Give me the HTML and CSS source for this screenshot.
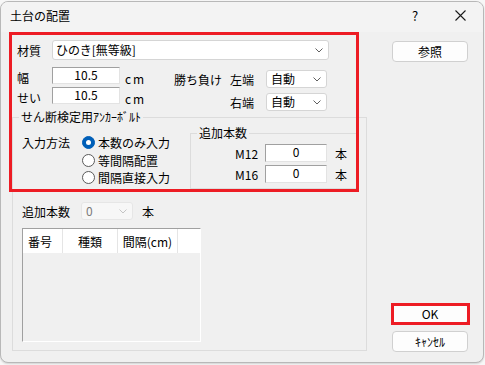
FILE: index.html
```html
<!DOCTYPE html>
<html lang="ja">
<head>
<meta charset="utf-8">
<title>土台の配置</title>
<link rel="stylesheet" href="styles.css">
</head>
<body>
<div class="screen">
  <div class="dialog">
    <div class="titlebar">
      <span class="title">土台の配置</span>
      <span class="cap cap-help">?</span>
      <span class="cap cap-close"><svg width="11" height="11" viewBox="0 0 11 11"><path d="M0.5 0.5 L10.5 10.5 M10.5 0.5 L0.5 10.5" stroke="#1a1a1a" stroke-width="1.1" fill="none"/></svg></span>
    </div>
    <div class="main">
      <div class="left">
        <div class="row-mat">
          <span class="lbl-mat">材質</span>
          <div class="combo combo-mat"><span>ひのき[無等級]</span><svg class="chev" width="8" height="5" viewBox="0 0 8 5"><path d="M0.5 0.5 L4 4 L7.5 0.5" fill="none" stroke="#606060"/></svg></div>
        </div>
        <div class="dims">
          <div class="dim-col">
            <div class="dim-row"><span class="dim-lbl">幅</span><div class="edit edit-dim">10.5</div><span class="unit">cm</span></div>
            <div class="dim-row"><span class="dim-lbl">せい</span><div class="edit edit-dim">10.5</div><span class="unit">cm</span></div>
          </div>
          <div class="win-col">
            <div class="win-row"><span class="win-lbl">勝ち負け</span><span class="side-lbl">左端</span><div class="combo combo-side"><span>自動</span><svg class="chev" width="8" height="5" viewBox="0 0 8 5"><path d="M0.5 0.5 L4 4 L7.5 0.5" fill="none" stroke="#606060"/></svg></div></div>
            <div class="win-row"><span class="win-lbl"></span><span class="side-lbl">右端</span><div class="combo combo-side"><span>自動</span><svg class="chev" width="8" height="5" viewBox="0 0 8 5"><path d="M0.5 0.5 L4 4 L7.5 0.5" fill="none" stroke="#606060"/></svg></div></div>
          </div>
        </div>
        <fieldset class="group">
          <legend>せん断検定用ｱﾝｶｰﾎﾞﾙﾄ</legend>
          <div class="g-row1">
            <div class="method">
              <span class="method-lbl">入力方法</span>
              <div class="radios">
                <div class="radio"><span class="rb on"></span><span>本数のみ入力</span></div>
                <div class="radio"><span class="rb"></span><span>等間隔配置</span></div>
                <div class="radio"><span class="rb"></span><span>間隔直接入力</span></div>
              </div>
            </div>
            <fieldset class="sub">
              <legend>追加本数</legend>
              <div class="sub-rows">
                <div class="sub-row"><span class="m-lbl">M12</span><div class="edit edit-m">0</div><span class="m-unit">本</span></div>
                <div class="sub-row"><span class="m-lbl">M16</span><div class="edit edit-m">0</div><span class="m-unit">本</span></div>
              </div>
            </fieldset>
          </div>
          <div class="g-row2">
            <span class="add-lbl">追加本数</span>
            <div class="combo combo-dis"><span>0</span><svg class="chev" width="8" height="5" viewBox="0 0 8 5"><path d="M0.5 0.5 L4 4 L7.5 0.5" fill="none" stroke="#c4c4c4"/></svg></div>
            <span class="add-unit">本</span>
          </div>
          <div class="list">
            <div class="list-head">
              <span class="col c1">番号</span>
              <span class="col c2">種類</span>
              <span class="col c3">間隔(cm)</span>
              <span class="col c4"></span>
            </div>
          </div>
        </fieldset>
      </div>
      <div class="right">
        <div class="btn">参照</div>
        <div class="btn btn-ok">OK</div>
        <div class="btn btn-cancel">ｷｬﾝｾﾙ</div>
      </div>
    </div>
    <div class="hl hl-main"></div>
    <div class="hl hl-ok"></div>
  </div>
</div>
</body>
</html>
```
FILE: styles.css
```css
* { box-sizing: border-box; }
html, body { margin: 0; padding: 0; }
body {
  background: #f7f7f7;
  font-family: "Noto Sans CJK JP", "Noto Sans", sans-serif;
  font-size: 12px;
  color: #000;
  width: 485px;
  height: 365px;
  overflow: hidden;
}
.screen { padding-top: 1px; }
.dialog {
  position: relative;
  width: 484px;
  height: 362px;
  border: 1px solid #b8b8b8;
  border-radius: 8px;
  background: #f0f0f0;
  display: flex;
  flex-direction: column;
  box-shadow: 0 1px 2px rgba(0,0,0,0.15);
  overflow: hidden;
}
.titlebar {
  height: 30px;
  display: flex;
  align-items: flex-start;
  background: #f3f3f3;
  line-height: 27px;
  flex: none;
}
.title { padding-left: 9px; flex: 1; }
.cap {
  height: 27px;
  display: flex;
  align-items: center;
  justify-content: center;
}
.cap-help { width: 46px; font-size: 13px; }
.cap-close { width: 45px; }
.main { flex: 1; display: flex; }
.left { width: 365px; padding-left: 11px; }
.right {
  margin-left: auto;
  padding: 9px 15px 10px 0;
  display: flex;
  flex-direction: column;
}
.btn {
  width: 76px;
  height: 21px;
  border: 1px solid #d0d0d0;
  border-radius: 4px;
  background: #fdfdfd;
  display: flex;
  align-items: center;
  justify-content: center;
  line-height: 1;
}
.btn-ok { margin-top: auto; }
.btn-cancel { margin-top: 7px; }

.combo {
  display: flex;
  align-items: center;
  justify-content: space-between;
  background: #fff;
  border: 1px solid #d5d5d5;
  border-radius: 3px;
  padding: 0 5px 0 3px;
  line-height: 14px;
}
.chev { flex: none; }

.row-mat {
  margin-top: 8px;
  padding-left: 5px;
  display: flex;
  align-items: center;
  height: 20px;
}
.lbl-mat { width: 35px; }
.combo-mat { width: 277px; height: 20px; }

.dims { margin-top: 7px; padding-left: 5px; display: flex; }
.dim-col { width: 157px; display: flex; flex-direction: column; gap: 3px; }
.dim-row { display: flex; height: 17px; }
.dim-lbl { width: 35px; padding-top: 3px; line-height: 16px; }
.edit {
  background: #fff;
  border: 1px solid;
  border-color: #a0a0a0 #e3e3e3 #e3e3e3 #a0a0a0;
  text-align: center;
  line-height: 14px;
}
.edit-dim { width: 68px; height: 17px; }
.unit { margin-left: 5px; padding-top: 4px; line-height: 16px; letter-spacing: 2px; }
.win-col { margin-top: 3px; display: flex; flex-direction: column; gap: 5px; }
.win-row { display: flex; align-items: center; height: 18px; }
.win-lbl { width: 56px; }
.side-lbl { width: 36px; }
.combo-side { width: 61px; height: 18px; padding-left: 4px; }

.group {
  margin: 0;
  width: 354px;
  border: 1px solid #dcdcdc;
  padding: 0 8px 8px 9px;
}
.group > legend { padding: 0 2px; margin-left: -3px; line-height: 12px; }
.g-row1 { margin-top: 4px; display: flex; }
.method { width: 168px; padding-top: 7px; display: flex; }
.method-lbl { width: 60px; line-height: 17.5px; }
.radios { display: flex; flex-direction: column; }
.radio { display: flex; align-items: center; height: 17.5px; gap: 3px; }
.rb {
  width: 13px;
  height: 13px;
  border-radius: 50%;
  border: 1px solid #5a5a5a;
  background: #fff;
  flex: none;
}
.rb.on {
  background: #005fb8;
  border-color: #005fb8;
  display: flex;
  align-items: center;
  justify-content: center;
}
.rb.on::after {
  content: "";
  width: 5px;
  height: 5px;
  border-radius: 50%;
  background: #fff;
}
.sub {
  margin: 0;
  width: 168px;
  border: 1px solid #dcdcdc;
  padding: 5px 0 5px 0;
}
.sub > legend { margin-left: 6px; padding: 0 2px; line-height: 12px; }
.sub-rows { display: flex; flex-direction: column; gap: 3px; }
.sub-row { display: flex; align-items: center; height: 18px; padding-left: 44px; }
.m-lbl { width: 30px; }
.edit-m { width: 62px; height: 18px; }
.m-unit { margin-left: 8px; }

.g-row2 { margin-top: 13px; display: flex; align-items: center; height: 18px; }
.add-lbl { width: 59px; }
.combo-dis {
  width: 52px;
  height: 18px;
  background: #f7f7f7;
  border-color: #e6e6e6;
  color: #7a7a7a;
  padding-left: 4px;
}
.add-unit { margin-left: 9px; }

.list {
  margin-top: 8px;
  width: 179px;
  height: 114px;
  border: 1px solid;
  border-color: #a0a0a0 #fff #fff #a0a0a0;
}
.list-head { display: flex; height: 24px; background: #fff; }
.col { border-right: 1px solid #e5e5e5; display: flex; align-items: center; }
.c1 { width: 40px; padding-left: 5px; }
.c2 { width: 55px; justify-content: center; }
.c3 { width: 60px; justify-content: center; }
.c4 { flex: 1; border-right: none; }

.hl {
  position: absolute;
  border: 3px solid #ed1c24;
  pointer-events: none;
}
.hl-main { left: 8px; top: 30px; width: 350px; height: 160px; }
.hl-ok { left: 390px; top: 301px; width: 79px; height: 22px; }
```
